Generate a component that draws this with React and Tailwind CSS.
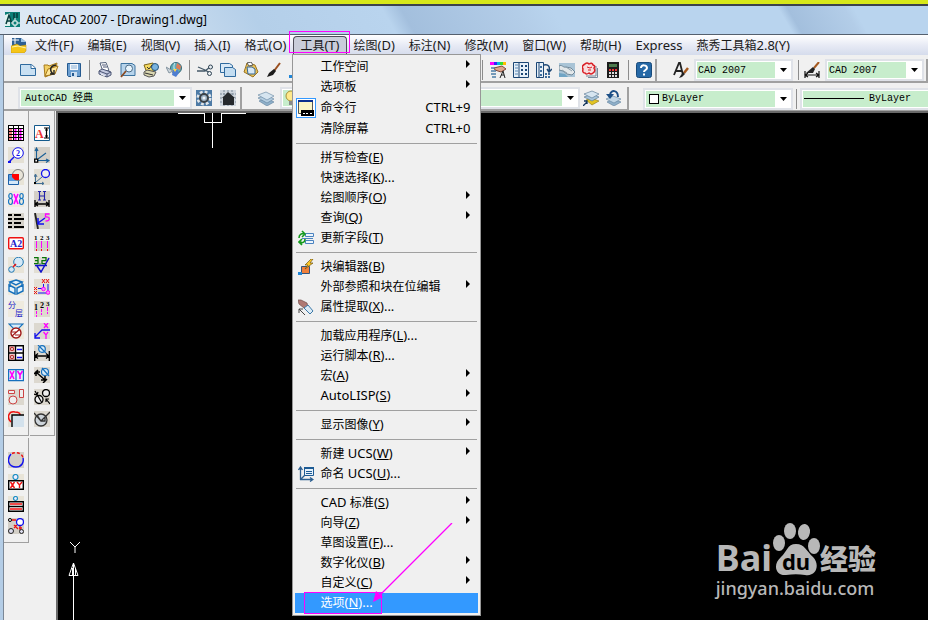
import React from "react";

// text inside the small tool icons
function T({ x, y, s = 8, fill = "#000", bold, children }) {
  return (
    <text x={x} y={y} fontSize={s} fill={fill} fontWeight={bold ? 700 : 400} fontFamily="Liberation Serif, Noto Sans CJK SC, serif">
      {children}
    </text>
  );
}

const art = {
  acad: (
    <>
      <path d="M0 0h15v15H0z" fill="#0d7f78" />
      <path d="M0 3l5-2v13H0z" fill="#dff3ee" />
      <path d="M1 12l3-9 3 9M2 9h4M9 1v6M12 1v5" stroke="#063c3c" strokeWidth="1.5" />
      <path d="M10 6v9M6 11h9" stroke="#fff" strokeWidth="1" />
      <path d="M8 9h4v4H8z" fill="#0d7f78" stroke="#fff" />
    </>
  ),
  dwg: (
    <>
      <path d="M1 1h9l5 4v7H1z" fill="#2d5f93" />
      <path d="M10 1l5 4h-5z" fill="#9cc3e6" />
      <path d="M4 0v7M1 3h7" stroke="#fff" />
      <path d="M0 9l6-2 3 2 6-1v6l-2 2H0z" fill="#f5c518" stroke="#b98a08" strokeWidth=".5" />
      <path d="M1 10l6-1 8 2" stroke="#fff3a8" />
    </>
  ),
  newFile: (
    <>
      <path d="M.5 2.500h11l4 3.500v7.500H.5z" fill="#c9e0f2" stroke="#2f6a9e" />
      <path d="M11 2.500v4h4" fill="#fff" stroke="#2f6a9e" />
    </>
  ),
  open: (
    <>
      <path d="M1 3h4l1 1 8-3-2 10-10 4z" fill="#f2cf63" stroke="#a77a1d" />
      <path d="M2 14L5 7l10-3-3 8z" fill="#ffe79a" stroke="#a77a1d" />
      <path d="M13 3C7 4 6 8 10 12M7 12h4V8" stroke="#222" strokeWidth="1.400" />
    </>
  ),
  save: (
    <>
      <path d="M1.500 1.500h13v13h-12l-1-1z" fill="#6b9ed0" stroke="#24598f" />
      <path d="M4 2h8v6H4z" fill="#f4f8fc" />
      <path d="M5 4h6M5 6h6" stroke="#8ab0d5" />
      <path d="M5 10h6v5H5z" fill="#cfe0f1" />
      <path d="M6 11h2v3H6z" fill="#24598f" />
    </>
  ),
  print: (
    <>
      <path d="M3 1l6-.5 3 8-6 1z" fill="#fff" stroke="#55637c" />
      <path d="M2 9l3-2 9 3v3l-4 2-8-3z" fill="#c3c9e0" stroke="#4c5675" />
      <path d="M2 9l8 3 4-2M10 12v3M5 3h4M6 5h4" stroke="#4c5675" />
      <path d="M4 12l4 2" stroke="#fff" />
    </>
  ),
  preview: (
    <>
      <path d="M1 1.500h11l3 2v10H1z" fill="#b7d4ec" stroke="#3c739f" />
      <circle cx="9" cy="6.500" r="3.500" fill="#e8f4fc" stroke="#4a6a86" />
      <path d="M6 9l-5 6" stroke="#8a4a22" strokeWidth="1.800" />
    </>
  ),
  publish: (
    <>
      <path d="M1 3l9-2 3 7-9 3z" fill="#f5d95f" stroke="#7c6418" />
      <circle cx="12" cy="5" r="3.500" fill="#79b3df" stroke="#25577f" />
      <path d="M1 10l3-2 9 2-2 4-5 1-5-2z" fill="#d9d6b0" stroke="#555" />
      <path d="M4 5l2 2 3-4M2 11l8 2" stroke="#333" />
    </>
  ),
  dwf: (
    <>
      <circle cx="10" cy="6" r="5.500" fill="#5faab8" stroke="#356a78" />
      <path d="M9 1c-2 3-1 7 1 10" stroke="#d7f0f2" />
      <path d="M11 1l4 3-1 4-4-2z" fill="#e07b54" />
      <path d="M7 8l4-1 2 4-3 4-4-2z" fill="#4f7ed0" />
      <path d="M0 5l7 4-4 2z" fill="#ccd6dd" stroke="#8594a0" />
      <path d="M7 7h4l-2 3z" fill="#ffd94b" />
    </>
  ),
  cut: (
    <>
      <path d="M0 9h8l5-4M1 5l7 3 5 3" stroke="#445868" strokeWidth="1.300" />
      <circle cx="13.500" cy="5" r="2" fill="#e9eef2" stroke="#2e4252" />
      <circle cx="12.500" cy="11.500" r="2" fill="#e9eef2" stroke="#2e4252" />
    </>
  ),
  copy: (
    <>
      <path d="M.5 1.500h9l3 2v7H.5z" fill="#d9e9f6" stroke="#2f6a9e" />
      <path d="M4.500 5.500h8l3 2v7h-11z" fill="#c3ddf1" stroke="#2f6a9e" />
    </>
  ),
  paste: (
    <>
      <path d="M4 1l8 2 3 7-5 5-9-5z" fill="#e9c25a" stroke="#9c7420" />
      <path d="M4 5h5l3 2v5H5z" fill="#d7e8f5" stroke="#36658e" />
      <path d="M4 1l4-1 2 3-4 1z" fill="#fff" stroke="#555" />
    </>
  ),
  brush: (
    <>
      <path d="M14 1L8 9" stroke="#9a4f1f" strokeWidth="2" />
      <path d="M8 7l2 2-3 4-6 2 2-4z" fill="#1c1c1c" />
    </>
  ),
  blockEdit: (
    <>
      <path d="M3.500 7.500h8v7h-8z" fill="#f0803c" stroke="#35547a" />
      <path d="M0 13h4v3H0z" fill="#1f86d8" />
      <path d="M13 0L7 6h3L7 10l8-6h-3l3-4z" fill="#ffc928" stroke="#6d5310" strokeWidth=".7" />
    </>
  ),
  props: (
    <>
      <path d="M0 0h4v3H0z" fill="#f0f" />
      <path d="M4 0h3v3H4z" fill="#32f" />
      <path d="M7 0h3v3H7z" fill="#0bd" />
      <path d="M10 0h3v3h-3z" fill="#3d3" />
      <path d="M13 0h3v3h-3z" fill="#fb0" />
      <path d="M4 6l8-2 4 3-5 3-6-2z" fill="#dca58d" stroke="#7e4838" />
      <path d="M1 6h4M1 9h5M1 12h5M2 15h4" stroke="#4c7da6" strokeWidth="1.500" />
      <path d="M10 16l3-7 2 7M11 13h3" stroke="#222" />
    </>
  ),
  center: (
    <>
      <path d="M.5.5h15v15H.5z" fill="#e7f0f8" stroke="#1c4775" />
      <path d="M6 0v16" stroke="#1c4775" />
      <path d="M2 3h3M2 6h3M2 9h3M2 12h3" stroke="#5787b5" />
      <path d="M8 3h2v2H8zM12 3h2v2h-2zM8 7h2v2H8zM12 7h2v2h-2zM8 11h2v2H8zM12 11h2v2h-2z" fill="#1c4775" />
    </>
  ),
  palettes: (
    <>
      <path d="M.5.5h7v15h-7z" fill="#e7f0f8" stroke="#1c4775" />
      <path d="M3 0v16" stroke="#1c4775" />
      <path d="M4 4h2v2H4zM4 8h2v2H4zM4 12h2v2H4zM9 11h2v2H9zM12 11h2v2h-2zM9 14h2v2H9zM12 14h2v2h-2z" fill="#3e6c9b" />
      <path d="M8 3c5-1 6 2 5 6M11 7l2 3 3-3" stroke="#1c4775" strokeWidth="1.500" />
    </>
  ),
  sheet: (
    <>
      <path d="M0 1h16v14H0z" fill="#a9c4d6" />
      <path d="M0 4c3-2 4 2 7 1l5 1 4 4-3 3-5-1-4-3-4-1z" fill="#e3e8ea" stroke="#71899a" />
      <path d="M7 5l6 4M3 8l5 3" stroke="#8fa2ae" />
      <path d="M0 11l6 1 3 3H0z" fill="#6fa4c4" />
    </>
  ),
  markup: (
    <>
      <path d="M14 4v10H4M15.500 6v9.500H6" stroke="#77899a" />
      <path d="M3 1h9v11H1V4z" fill="#f8dede" />
      <path d="M3 2q2-2 4 0q3-2 4 1q3 1 1 3q2 3-1 5q-2 2-4 0q-3 2-4 0q-3 0-2-4q-2-3 2-5z" stroke="#d91f26" strokeWidth="1.500" />
      <path d="M5 5l3 1 2-1M6 8h3" stroke="#d91f26" />
    </>
  ),
  calc: (
    <>
      <path d="M2 0h12v16H2z" fill="#1c1c1c" />
      <path d="M4 2h8v3H4z" fill="#4c7a4c" />
      <path d="M4 7h2v2H4zM7 7h2v2H7zM10 7h2v2h-2z" fill="#e33" />
      <path d="M4 10h2v2H4zM7 10h2v2H7zM10 10h2v2h-2zM4 13h2v2H4zM7 13h2v2H7zM10 13h2v2h-2z" fill="#ddd" />
    </>
  ),
  help: (
    <>
      <rect x=".5" y=".5" width="15" height="15" rx="2" fill="#2568a6" stroke="#184a7a" />
      <path d="M5 6c0-4 6-3 6 0c0 2-3 2-3 4M8 11.500v2" stroke="#fff" strokeWidth="2" />
    </>
  ),
  textStyle: (
    <>
      <path d="M1 13L6 1h1l3 12M3 9h6" stroke="#222" strokeWidth="1.800" />
      <path d="M15 6l-4 5" stroke="#a5591f" strokeWidth="2.500" />
      <path d="M10 10l2 2-3 3-3 1z" fill="#222" />
    </>
  ),
  dimStyle: (
    <>
      <path d="M1 9v7M15 9v7M1 13h14M4 11l-3 2 3 2M12 11l3 2-3 2" stroke="#111" strokeWidth="1.200" />
      <path d="M15 0l-5 6" stroke="#a5591f" strokeWidth="2" />
      <path d="M9 5l2 2-2 4H2z" fill="#222" />
    </>
  ),
  gear: (
    <>
      <path d="M0 0h16v16H0z" fill="#4e7ba6" />
      <circle cx="8" cy="8" r="6" stroke="#dfe5ea" strokeWidth="3" strokeDasharray="2.700 2" />
      <circle cx="8" cy="8" r="4" fill="#9fb4c6" stroke="#3b4248" strokeWidth="2" />
      <circle cx="8" cy="8" r="1.500" fill="#eef3f7" />
    </>
  ),
  home: (
    <>
      <path d="M0 0h16v16H0z" fill="#cfd6de" />
      <path d="M0 4h16M0 8h16M0 12h16M4 0v16M8 0v16M12 0v16" stroke="#7d8b99" strokeDasharray="2 1" />
      <path d="M8 2l7 6h-1v7H3V8H2z" fill="#25292d" />
    </>
  ),
  layers: (
    <>
      <path d="M1 11l7-3 8 4-7 4z" fill="#8fb0ca" stroke="#5e7f9c" strokeWidth=".6" />
      <path d="M0 8l8-3 8 4-7 4z" fill="#b4cde0" stroke="#5e7f9c" strokeWidth=".6" />
      <path d="M0 5l8-3 8 4-7 4z" fill="#d6e5f0" stroke="#5e7f9c" strokeWidth=".6" />
    </>
  ),
  layerMake: (
    <>
      <path d="M3 10l5-2 8 3-7 4z" fill="#e3c422" stroke="#8b7612" strokeWidth=".6" />
      <path d="M1 7l8-3 7 3-7 4z" fill="#a9c5da" stroke="#4d6f8c" strokeWidth=".6" />
      <path d="M1 4l8-3 7 3-7 4z" fill="#d6e5f0" stroke="#4d6f8c" strokeWidth=".6" />
      <path d="M0 16l4-4M1 11h3v3" stroke="#12355c" strokeWidth="1.300" />
    </>
  ),
  layerPrev: (
    <>
      <path d="M2 12l6-3 8 3-7 4z" fill="#8fb0ca" stroke="#5e7f9c" strokeWidth=".6" />
      <path d="M1 9l7-3 8 3-7 4z" fill="#c1d6e6" stroke="#5e7f9c" strokeWidth=".6" />
      <path d="M13 7C13 0 6-1 5 5" stroke="#1d4f86" strokeWidth="2" />
      <path d="M1 4h8L5 9z" fill="#1d4f86" />
    </>
  ),
  bulb: (
    <>
      <circle cx="8" cy="6" r="5" fill="#ffe98a" stroke="#a8913a" />
      <path d="M6 11h4v4H6z" fill="#8a8a8a" />
    </>
  ),
  // left tool columns
  grid: (
    <>
      <path d="M0 0h16v16H0z" fill="#fff" />
      <path d="M7.500 3v13M12.500 3v13" stroke="#f0f" strokeWidth="2" />
      <path d="M0 .5h16M0 3.500h16M0 6.500h16M0 9.500h16M0 12.500h16M0 15.500h16M.5 0v16M5.500 0v16M10.500 0v16M15.500 0v16" stroke="#000" />
      <path d="M1 5h3M1 8h3M1 11h3M1 14h3" stroke="#e00" />
    </>
  ),
  mag: (
    <>
      <path d="M0 0h16v16H0z" fill="#e4e0d4" />
      <circle cx="10" cy="6" r="5.300" fill="#fff" stroke="#11e" />
      <path d="M6 10l-5 5" stroke="#11e" strokeWidth="1.500" />
      <path d="M0 14h3v2H0z" fill="#11e" />
      <T x="8" y="9" fill="#11e" bold>2</T>
    </>
  ),
  shapes: (
    <>
      <path d="M0 0h16v16H0z" fill="#e8e4d8" />
      <path d="M.5 5.500h10v10H.5z" fill="#5b9bdc" stroke="#1c5fa8" />
      <path d="M1 12h9v3H1z" fill="#d5e8f8" />
      <circle cx="10" cy="6" r="5.500" stroke="#7a7a7a" />
      <path d="M4 5h7v6H7L4 8z" fill="#f00" />
    </>
  ),
  bxb: (
    <>
      <path d="M0 0h16v16H0z" fill="#eeeade" />
      <path d="M5 2h6v12H5z" fill="#ffd8ff" />
      <ellipse cx="2.500" cy="5" rx="1.700" ry="2.500" stroke="#1576c4" strokeWidth="1.200" />
      <ellipse cx="2.500" cy="10.500" rx="2" ry="3" stroke="#1576c4" strokeWidth="1.200" />
      <ellipse cx="13.500" cy="5" rx="1.700" ry="2.500" stroke="#1576c4" strokeWidth="1.200" />
      <ellipse cx="13.500" cy="10.500" rx="2" ry="3" stroke="#1576c4" strokeWidth="1.200" />
      <path d="M6 3l4 10M10 3L6 13" stroke="#f0f" strokeWidth="1.600" />
    </>
  ),
  list: (
    <>
      <path d="M0 0h16v16H0z" fill="#d6d2ca" />
      <path d="M0 2h4M6 2h7M0 6h4M6 6h10M0 10h4M6 10h7M0 14h4M6 14h10" stroke="#000" strokeWidth="2" />
    </>
  ),
  a2: (
    <>
      <rect x=".7" y="2.700" width="14.600" height="11" rx="1" fill="#fff" stroke="#e11" strokeWidth="1.400" />
      <T x="2" y="12" s="10" fill="#22c" bold>A2</T>
    </>
  ),
  bubbles: (
    <>
      <path d="M0 0h16v16H0z" fill="#e8e4d8" />
      <circle cx="10.500" cy="5" r="4.800" fill="#d4e8f6" stroke="#2078b4" />
      <circle cx="3.500" cy="12.500" r="2.800" fill="#d4e8f6" stroke="#2078b4" />
      <path d="M5 10l3-3" stroke="#e11" strokeWidth="1.500" />
    </>
  ),
  cubes: (
    <>
      <path d="M0 0h16v16H0z" fill="#eee9dc" />
      <path d="M8 1l6 2-6 3-6-3zM1 6l6 3v6l-6-3zM9 9l6-3v6l-6 3z" fill="#e5f4fd" stroke="#1670bd" strokeWidth="1.400" />
      <path d="M2 3v3M14 3v3" stroke="#1670bd" strokeWidth="1.400" />
    </>
  ),
  fenceng: (
    <>
      <path d="M0 0h16v16H0z" fill="#eeeade" />
      <T x="0" y="7" s="8" fill="#22c">分</T>
      <T x="7" y="15" s="8" fill="#22c">层</T>
    </>
  ),
  funnel: (
    <>
      <path d="M0 0h16v16H0z" fill="#eee9dc" />
      <path d="M1 1h14l-5 5H6z" fill="#d6ecfa" stroke="#1670bd" strokeWidth="1.200" />
      <circle cx="8" cy="10" r="5" fill="#fff" stroke="#a01818" strokeWidth="1.400" />
      <path d="M4 13l8-7M4 9h5M7 12h5" stroke="#a01818" strokeWidth="1.200" />
    </>
  ),
  table: (
    <>
      <path d="M.7.7h14.600v14.600H.7z" fill="#fff" stroke="#000" strokeWidth="1.400" />
      <path d="M7.500 0v16M0 8h16" stroke="#000" strokeWidth="1.400" />
      <path d="M1.500 1.500h5v5h-5zM1.500 9.500h5v5h-5z" fill="#e88" />
      <circle cx="4" cy="4" r="1.500" fill="#fff" stroke="#a22" />
      <circle cx="4" cy="12" r="1.500" fill="#fff" stroke="#a22" />
      <path d="M9 4.500h5M9 12.500h5" stroke="#11e" strokeWidth="1.600" />
    </>
  ),
  xy: (
    <>
      <path d="M.6 2.600h14.800v11H.6zM8 3v10" fill="#e0f0fa" stroke="#1670bd" strokeWidth="1.200" />
      <path d="M2 4l4 8M6 4l-4 8M9.500 4l2.500 4 2.500-4M12 8v4" stroke="#f0f" strokeWidth="1.600" />
    </>
  ),
  forms: (
    <>
      <path d="M0 0h16v16H0z" fill="#dcd8cf" />
      <path d="M.5 1.500h6v3h-6zM11.500.5h4v8h-4z" fill="#eee" stroke="#c44" />
      <circle cx="5" cy="11" r="4" fill="#eee" stroke="#c44" />
    </>
  ),
  corner: (
    <>
      <path d="M0 0h16v16H0z" fill="#e4e0d6" />
      <path d="M3 11C-2 6 1 0 7 1c3 0 5 1 5 3" stroke="#e11" strokeWidth="1.500" />
      <path d="M4 4h12v12H4z" fill="#d3e1ec" />
      <path d="M4 16V4h12" stroke="#000" strokeWidth="1.400" />
    </>
  ),
  ai: (
    <>
      <path d="M.5.5h15v15H.5z" fill="#fff" stroke="#145a8c" />
      <T x="1" y="13" s="12" fill="#e33" bold>A</T>
      <path d="M10 3h5M12.500 3v10M10 13h5M11 5h3M11 11h3" stroke="#000" strokeWidth="1.200" />
    </>
  ),
  ucs1: (
    <>
      <path d="M0 0h16v16H0z" fill="#d3cfc7" />
      <path d="M2.500 13V1M1 4l1.500-3L4 4M3 13.500h12M12 12l3 1.500-3 2M4 12l8-6" stroke="#1a5f96" strokeWidth="1.100" />
      <path d="M.7 12.200h3v3h-3z" fill="#fff" stroke="#000" strokeWidth="1.300" />
    </>
  ),
  ucs2: (
    <>
      <path d="M0 0h16v16H0z" fill="#e2ded3" />
      <path d="M1.500 13V6M0 8l1.500-3L3 8M2 14.500h8M8 13l2 1.500L8 16M2 13l6-5" stroke="#426f94" />
      <circle cx="11.500" cy="4.500" r="4" fill="#eee" stroke="#11e" strokeWidth="1.300" />
      <path d="M0 13h2v2H0z" fill="#000" />
    </>
  ),
  hdim: (
    <>
      <path d="M0 0h16v16H0z" fill="#d3cfc7" />
      <path d="M1 9v7M15 9v7M1 13h14M4 11l-3 2 3 2M12 11l3 2-3 2" stroke="#000" strokeWidth="1.300" />
      <path d="M5.500 0v9M10.500 0v9M5 5h6M4 .5h3M9 .5h3M4 9h3M9 9h3" stroke="#22a" strokeWidth="1.100" />
    </>
  ),
  five: (
    <>
      <path d="M0 0h16v16H0z" fill="#d3cfc7" />
      <path d="M1 0l3 16" stroke="#222" strokeWidth="1.800" />
      <path d="M11 5l-7 5M4 5v6h6" stroke="#11e" strokeWidth="1.500" />
      <path d="M15.500 1h-4v3c5-1 5 4 0 4" stroke="#f0f" strokeWidth="1.300" />
    </>
  ),
  ticks: (
    <>
      <path d="M0 0h16v16H0z" fill="#d3cfc7" />
      <path d="M0 0h16v6H0z" fill="#eee" />
      <T x="0" y="5" s="7" bold>1</T>
      <T x="6" y="5" s="7" bold>2</T>
      <T x="12" y="5" s="7" bold>3</T>
      <path d="M2.500 6v7M7.500 6v7M13.500 6v7" stroke="#f0f" />
      <path d="M2.500 14v2M7.500 14v2M13.500 14v2" stroke="#e11" />
    </>
  ),
  rough: (
    <>
      <path d="M0 0h16v16H0z" fill="#e2ded3" />
      <path d="M0 .7h4v6H0M1 3.700h3M5.500 7h1M8 .7h4v3H8v3h4" stroke="#087408" strokeWidth="1.300" />
      <path d="M1 8.500h12M3 9l4 6 8-14" stroke="#11c" strokeWidth="1.500" />
    </>
  ),
  coord: (
    <>
      <path d="M0 0h16v16H0z" fill="#e2ded3" />
      <path d="M8 0l3 4M11 0L8 4M12 0l3 4M15 0l-3 4M0 8l3 3M3 8l-3 3M0 12l3 3M3 12l-3 3" stroke="#e11" />
      <path d="M4 9.500h6M4 14h10M9.500 5v5M14 5v9" stroke="#11e" />
      <circle cx="9.500" cy="10" r="1.800" fill="#f8f" stroke="#f0f" />
      <circle cx="14" cy="13.500" r="1.800" fill="#f8f" stroke="#f0f" />
    </>
  ),
  steps: (
    <>
      <path d="M0 0h16v16H0z" fill="#dedace" />
      <T x="0" y="9" s="8" bold>1</T>
      <T x="6" y="7" s="8" bold>2</T>
      <T x="12" y="5" s="7" bold>3</T>
      <path d="M2.500 10v3M7.500 8v3M13.500 6v4M2.500 14v2M7.500 12v2M13.500 11v2" stroke="#f0f" />
    </>
  ),
  leader: (
    <>
      <path d="M0 0h16v16H0z" fill="#dcd8cf" />
      <path d="M16 7H8l-7 7M1 10v5h5" stroke="#11e" strokeWidth="1.300" />
      <path d="M10 0l4 5M14 0l-4 5M9.500 9l2.500 3 2-3M12 12v4" stroke="#f0f" strokeWidth="1.300" />
    </>
  ),
  diaH: (
    <>
      <path d="M0 0h16v16H0z" fill="#dcd8cf" />
      <path d="M.7 6v10M15.300 6v10M1 11h14M4 8.500L1 11l3 2.500M12 8.500l3 2.500-3 2.500" stroke="#000" strokeWidth="1.300" />
      <circle cx="8" cy="4" r="3.300" fill="#d8ecf8" stroke="#1670bd" strokeWidth="1.200" />
      <path d="M4 0l8 8" stroke="#1670bd" strokeWidth="1.200" />
    </>
  ),
  diaD: (
    <>
      <path d="M0 0h16v16H0z" fill="#dcd8cf" />
      <path d="M2 5l9 8M0 7l4-4M9 16l4-4M2 9V5h4M11 9v4H7" stroke="#000" strokeWidth="1.500" />
      <circle cx="11" cy="5" r="3.500" fill="#d8ecf8" stroke="#1670bd" strokeWidth="1.200" />
      <path d="M8 1l7 8" stroke="#1670bd" strokeWidth="1.200" />
    </>
  ),
  rad: (
    <>
      <path d="M0 0h16v16H0z" fill="#dcd8cf" />
      <circle cx="5" cy="10.500" r="4" fill="#eee" stroke="#000" strokeWidth="1.300" />
      <circle cx="12" cy="4" r="3.500" fill="#eee" stroke="#000" strokeWidth="1.300" />
      <path d="M1 2l7 12M0 5l3 1 1-3M16 15l-4-5M12 13v-3h3" stroke="#000" strokeWidth="1.200" />
    </>
  ),
  dia: (
    <>
      <path d="M0 0h16v16H0z" fill="#dcd8cf" />
      <circle cx="7" cy="9" r="6" fill="#cdd4da" stroke="#333" strokeWidth="1.300" />
      <path d="M0 2l7 8 9-9M3 4l4 6h4V6" stroke="#333" strokeWidth="1.300" />
    </>
  ),
  arc: (
    <>
      <path d="M0 0h16v16H0z" fill="#d3cfc7" />
      <path d="M3 2C-2 8 1 15 8 15c6 0 8-5 7-9" stroke="#11e" strokeWidth="1.400" />
      <path d="M4 1.500C8-.5 14 1 15 6" stroke="#e11" strokeWidth="1.400" strokeDasharray="3 2" />
    </>
  ),
  xyBox: (
    <>
      <path d="M0 0h16v16H0z" fill="#e8e4d8" />
      <circle cx="7.500" cy="3" r="2.500" fill="#eef" stroke="#1c8fc4" strokeWidth="1.200" />
      <path d="M.7 6.700h14.600v8.600H.7z" fill="#fff" stroke="#000" strokeWidth="1.400" />
      <path d="M2.500 8l4 6M6.500 8l-4 6M9 8l2.500 3L14 8M11.500 11v3" stroke="#e11" strokeWidth="1.400" />
    </>
  ),
  rows: (
    <>
      <path d="M0 0h16v16H0z" fill="#e8e4d8" />
      <circle cx="7.500" cy="2.500" r="2" fill="#eef" stroke="#1c8fc4" strokeWidth="1.200" />
      <path d="M.7 5.700h14.600v9.600H.7zM1 10.500h14" fill="#fff" stroke="#000" strokeWidth="1.400" />
      <path d="M2 8h12M2 13h12" stroke="#e11" strokeWidth="1.300" />
    </>
  ),
  net: (
    <>
      <path d="M0 0h16v16H0z" fill="#d3cfc7" />
      <path d="M4 2h4M6 10l3-3M6 7l4 4M12 8v4M11 10h3" stroke="#e11" strokeWidth="1.300" />
      <circle cx="12" cy="4" r="3.500" fill="#fff" stroke="#11e" strokeWidth="1.300" />
      <circle cx="2" cy="2" r="1.500" fill="#fff" stroke="#000" />
      <circle cx="3" cy="13" r="2.500" fill="#dde" stroke="#222" />
      <circle cx="13.500" cy="13.500" r="2" fill="#dde" stroke="#222" />
    </>
  ),
  // menu icons
  cmd: (
    <>
      <path d="M.5 1.500h14v12H.5z" fill="#fbf6c8" stroke="#555" />
      <path d="M0 0h15v2H0z" fill="#0a2f8f" />
      <path d="M3 10h13v6H3z" fill="#000" />
      <path d="M5 13.500h2M8 13.500h2M12 13.500h2" stroke="#fff" />
    </>
  ),
  update: (
    <>
      <path d="M7.500 3.500h8v3h-8zM7.500 10.500h8v3h-8z" fill="#eef5fc" stroke="#4a83c0" />
      <path d="M4 8.500h11" stroke="#4a83c0" />
      <path d="M1 8c0-4 3-5 6-4M4 1l3 3-3 3M7 9c0 4-3 4-5 3M4 15l-3-3 3-3" stroke="#159a1d" strokeWidth="1.600" />
    </>
  ),
  extract: (
    <>
      <path d="M0 1h3l6 3 1 4-4 1-5-4z" fill="#b07a74" stroke="#6f4a48" strokeWidth=".7" />
      <path d="M6 9l4-3 5 6-3 3z" fill="#dcebf6" stroke="#3d7aa8" />
      <path d="M1 14v-4h4M1 10l6 6" stroke="#444" />
    </>
  ),
  ucsName: (
    <>
      <path d="M6.500 1.500h9v8h-9z" fill="#e5f1fb" stroke="#1d5b94" />
      <path d="M6 1h10v2H6zM8 5h6v1H8zM8 7h6v1H8z" fill="#1d5b94" />
      <path d="M2.500 14V1M.5 4l2-3 2 3M2 13.500h13M12 11.500l3 2-3 2M3 13l4-4" stroke="#2c5f90" strokeWidth="1.300" />
    </>
  ),
};

function Icon({ name }) {
  return (
    <svg viewBox="0 0 16 16" fill="none" className="block h-4 w-4 shrink-0" aria-hidden="true">
      {art[name]}
    </svg>
  );
}

function Tool({ name }) {
  return (
    <button type="button" aria-label={name} className="block h-4 w-4 shrink-0">
      <Icon name={name} />
    </button>
  );
}

const Divider = () => <div className="h-5 w-px shrink-0 bg-[#8c8c8c]" />;

function Select({ label, value, className = "", selectClass = "pl-1", children }) {
  return (
    <div className={"relative h-[22px] shrink-0 border-2 border-[#dfe2e8] bg-white font-[Liberation_Mono,Noto_Sans_CJK_SC,monospace] text-[10px] " + className}>
      <select aria-label={label} className={"block h-full w-full appearance-none border border-white bg-[#c7edcc] text-black outline-none " + selectClass}>
        <option>{value}</option>
      </select>
      {children}
      <span className="pointer-events-none absolute inset-y-0 right-0 flex w-4 items-center justify-center bg-white">
        <svg viewBox="0 0 7 4" className="h-1 w-[7px]">
          <path d="M0 0h7L3.500 4z" fill="#000" />
        </svg>
      </span>
    </div>
  );
}

function Panel({ className = "", children }) {
  return (
    <div className={"flex shrink-0 items-center border-r-2 border-b border-[#a0a0a0] " + className}>
      {children}
    </div>
  );
}

const menuBar = [
  ["文件", "(F)"],
  ["编辑", "(E)"],
  ["视图", "(V)"],
  ["插入", "(I)"],
  ["格式", "(O)"],
  ["工具", "(T)"],
  ["绘图", "(D)"],
  ["标注", "(N)"],
  ["修改", "(M)"],
  ["窗口", "(W)"],
  ["帮助", "(H)"],
  ["", "Express"],
  ["燕秀工具箱", "2.8(Y)"],
];

const toolsMenu = [
  [
    { text: "工作空间", sub: true },
    { text: "选项板", sub: true },
    { text: "命令行", keys: "CTRL+9", icon: "cmd", checked: true },
    { text: "清除屏幕", keys: "CTRL+0" },
  ],
  [
    { text: "拼写检查", hot: "E" },
    { text: "快速选择", hot: "K", dots: true },
    { text: "绘图顺序", hot: "O", sub: true },
    { text: "查询", hot: "Q", sub: true },
    { text: "更新字段", hot: "T", icon: "update" },
  ],
  [
    { text: "块编辑器", hot: "B", icon: "blockEdit" },
    { text: "外部参照和块在位编辑", sub: true },
    { text: "属性提取", hot: "X", dots: true, icon: "extract" },
  ],
  [
    { text: "加载应用程序", hot: "L", dots: true },
    { text: "运行脚本", hot: "R", dots: true },
    { text: "宏", hot: "A", sub: true },
    { latin: "AutoLISP", hot: "S", sub: true },
  ],
  [{ text: "显示图像", hot: "Y", sub: true }],
  [
    { text: "新建", tail: " UCS", hot: "W", sub: true },
    { text: "命名", tail: " UCS", hot: "U", dots: true, icon: "ucsName" },
  ],
  [
    { latin: "CAD ", text: "标准", hot: "S", sub: true },
    { text: "向导", hot: "Z", sub: true },
    { text: "草图设置", hot: "F", dots: true },
    { text: "数字化仪", hot: "B", sub: true },
    { text: "自定义", hot: "C", sub: true },
    { text: "选项", hot: "N", dots: true, active: true },
  ],
];

function MenuItem({ item }) {
  return (
    <button
      type="button"
      role="menuitem"
      className={
        "flex w-full items-center pr-2 text-left whitespace-pre " +
        (item.checked ? "h-[22px] " : "h-5 ") +
        (item.active ? "bg-[#3399ff] text-white" : "text-black")
      }
    >
      <span className="flex w-[25px] shrink-0 items-center">
        {item.icon && (
          <span className={item.checked ? "ml-px flex border border-[#3399ff] bg-white p-px" : "ml-[3px]"}>
            <Icon name={item.icon} />
          </span>
        )}
      </span>
      <span className="flex-1">
        {item.latin && <span className="text-[13px]">{item.latin}</span>}
        {item.text}
        <span className="text-[13px]">
          {item.tail}
          {item.hot && <>(<u>{item.hot}</u>)</>}
          {item.dots && "..."}
        </span>
      </span>
      {item.keys && <span className="text-[13px]">{item.keys}</span>}
      {item.sub && (
        <svg viewBox="0 0 4 8" className="mb-[6px] h-2 w-1">
          <path d="M0 0l4 4-4 4z" fill="#000" />
        </svg>
      )}
    </button>
  );
}

function ToolsMenu() {
  return (
    <div role="menu" className="absolute top-full -left-px z-20 -mt-px w-[189px] border border-[#979797] bg-[#f0f0f0] p-[2px] text-xs">
      {toolsMenu.map((group, i) => (
        <div key={i}>
          {i > 0 && (
            <div className="flex h-[9px] items-center px-px">
              <div className="h-px w-full bg-[#a0a0a0]" />
            </div>
          )}
          {group.map((item, j) => (
            <MenuItem key={j} item={item} />
          ))}
        </div>
      ))}
      <div className="pointer-events-none absolute bottom-px left-[11px] h-[22px] w-[78px] border border-[#f0f]" />
      <svg viewBox="0 0 80 80" fill="none" className="pointer-events-none absolute bottom-3 left-20 h-20 w-20">
        <path d="M79 0L6 73" stroke="#ff00ff" strokeWidth="1.300" />
        <path d="M0 79l3-11 7 6z" fill="#ff00ff" />
      </svg>
    </div>
  );
}

function MenuBar() {
  return (
    <nav className="flex h-5 shrink-0 items-center bg-linear-to-b from-white via-[#e8ebf5] to-[#d5dcec] pl-1 text-xs whitespace-nowrap text-[#1a1a1a]">
      <div className="pr-px pl-[3px]">
        <Icon name="dwg" />
      </div>
      {menuBar.map(([cn, latin]) =>
        cn === "工具" ? (
          <div key={latin} className="relative flex h-full items-center">
            <button type="button" className="h-[18px] rounded-t-sm border border-b-0 border-[#4d4d58] bg-[#c9cdda] px-[6px] leading-4">
              {cn}
              <span className="text-[13px]">{latin}</span>
            </button>
            <div className="pointer-events-none absolute -top-1 -left-1 z-30 h-[22px] w-[61px] border border-[#f0f]" />
            <ToolsMenu />
          </div>
        ) : (
          <button key={latin} type="button" className="px-[7px] leading-4">
            {cn}
            <span className="text-[13px]">{latin}</span>
          </button>
        )
      )}
    </nav>
  );
}

const colA = ["grid", "mag", "shapes", "bxb", "list", "a2", "bubbles", "cubes", "fenceng", "funnel", "table", "xy", "forms", "corner"];
const colB = ["ai", "ucs1", "ucs2", "hdim", "five", "ticks", "rough", "coord", "steps", "leader", "diaH", "diaD", "rad", "dia"];
const colC = ["arc", "xyBox", "rows", "net"];

function ToolColumn({ names }) {
  return (
    <div className="flex w-[25px] flex-col items-center gap-[6px] border-r border-b border-[#a0a0a0] pt-[14px] pb-2">
      {names.map((n) => (
        <Tool key={n} name={n} />
      ))}
    </div>
  );
}

function Watermark() {
  return (
    <div className="absolute right-[52px] bottom-5 text-[#b8b8b8]">
      <div className="flex items-end leading-none font-bold">
        <span className="font-['Noto_Sans',sans-serif] text-[36px] leading-9">Bai</span>
        <svg viewBox="0 0 48 54" className="h-[54px] w-12">
          <g fill="#b8b8b8">
            <ellipse cx="7" cy="21" rx="6" ry="8" />
            <ellipse cx="18" cy="9" rx="6" ry="8" />
            <ellipse cx="32" cy="10" rx="6" ry="8" transform="rotate(8 32 10)" />
            <ellipse cx="42" cy="24" rx="6" ry="8" />
            <path d="M24 22c-9 0-9 8-15 13c-9 8-5 19 5 18c7-1 13-1 19 0c12 2 15-11 8-18c-6-5-8-13-17-13z" />
          </g>
          <text x="24" y="48" textAnchor="middle" fontSize="22" fontWeight="700" fill="#000" fontFamily="Noto Sans, sans-serif">
            du
          </text>
        </svg>
        <span className="pb-1 font-['Noto_Sans_CJK_SC',sans-serif] text-[28px] leading-7 font-black">经验</span>
      </div>
      <div className="font-['Noto_Sans',sans-serif] text-lg leading-6 font-medium">jingyan.baidu.com</div>
    </div>
  );
}

function Canvas() {
  return (
    <main className="relative flex-1 overflow-hidden border-t-2 border-l-2 border-[#696969] bg-black">
      <svg viewBox="0 0 68 36" fill="none" className="absolute top-0 left-[120px] h-9 w-[68px]" shapeRendering="crispEdges">
        <path d="M0 .5h26M43 .5h25M26.500 0v9.500h17V0M34.500 0v35" stroke="#fff" />
      </svg>
      <svg viewBox="0 0 16 80" fill="none" className="absolute bottom-0 left-[10px] h-20 w-4">
        <path d="M2 2l5 5v6M12 2L7 7" stroke="#fff" />
        <path d="M5.500 23L1 35.500h9zM5.500 23v57M4.500 28v7M7.500 28v7" stroke="#fff" />
      </svg>
      <Watermark />
    </main>
  );
}

export default function App() {
  return (
    <div className="flex h-screen flex-col overflow-hidden border-t-4 border-[#d7e81a] bg-[#f0f0f0] font-['Noto_Sans','Noto_Sans_CJK_SC',sans-serif]">
      <header className="flex h-[31px] shrink-0 items-center gap-[5px] border-t-2 border-b border-t-[#3c424c] border-b-[#55606e] bg-[linear-gradient(60deg,#dfeaf5_0%,#d3e2f1_14%,#b4cfe9_28%,#b9d4ee_42%,#a3bfdd_44%,#b3cde8_56%,#b9d4ee_60%,#b9d4ee_84%,#a3bfdd_85%,#b3cde8_91%,#b9d4ee_92%)] pl-[5px]">
        <Icon name="acad" />
        <h1 className="text-xs leading-5 whitespace-pre text-black">AutoCAD 2007 - [Drawing1.dwg]</h1>
      </header>

      <div className="flex min-h-0 flex-1 border-l-[3px] border-[#b4cde6]">
        <div className="flex min-w-0 flex-1 flex-col border-l border-[#7c8896]">
          <MenuBar />

          <div className="flex h-7 shrink-0 border-b border-[#a0a0a0] pt-1">
            <Panel className="gap-[7px] pr-[3px] pl-4">
              <Tool name="newFile" />
              <Tool name="open" />
              <Tool name="save" />
              <Divider />
              <Tool name="print" />
              <Tool name="preview" />
              <Tool name="publish" />
              <Tool name="dwf" />
              <Divider />
              <Tool name="cut" />
              <Tool name="copy" />
              <Tool name="paste" />
              <Tool name="brush" />
              <Tool name="blockEdit" />
              <div className="w-[163px]" />
              <Divider />
              <Tool name="props" />
              <Tool name="center" />
              <Tool name="palettes" />
              <Tool name="sheet" />
              <Tool name="markup" />
              <Tool name="calc" />
              <Divider />
              <Tool name="help" />
            </Panel>
            <Panel className="gap-[5px] pr-[2px] pl-4">
              <Tool name="textStyle" />
              <Select label="文字样式" value="CAD 2007" className="w-[99px]" selectClass="pl-px" />
              <Divider />
              <Tool name="dimStyle" />
              <Select label="标注样式" value="CAD 2007" className="w-[99px]" selectClass="pl-px" />
            </Panel>
          </div>

          <div className="flex h-7 shrink-0 border-b border-[#a0a0a0] pt-1">
            <Panel className="gap-2 pr-1 pl-[14px]">
              <div className="-mr-1">
                <Select label="工作空间" value="AutoCAD 经典" className="w-[174px]" />
              </div>
              <Tool name="gear" />
              <Tool name="home" />
            </Panel>
            <Panel className="gap-[6px] pr-[6px] pl-4">
              <Tool name="layers" />
              <Select label="图层" value="" className="w-[300px]">
                <span className="pointer-events-none absolute top-px left-px">
                  <Icon name="bulb" />
                </span>
              </Select>
              <div className="-ml-[3px]">
                <Tool name="layerMake" />
              </div>
              <Tool name="layerPrev" />
            </Panel>
            <div className="flex min-w-0 flex-1 items-center gap-[3px] overflow-hidden pl-[14px]">
              <Select label="颜色" value="ByLayer" className="w-[150px]" selectClass="pl-4">
                <span className="pointer-events-none absolute top-1 left-1 h-[10px] w-[10px] border border-black bg-white" />
              </Select>
              <Divider />
              <Select label="线型" value="ByLayer" className="w-[190px]" selectClass="pl-[66px]">
                <span className="pointer-events-none absolute top-2 left-[2px] h-px w-[60px] bg-black" />
              </Select>
            </div>
          </div>

          <div className="flex min-h-0 flex-1">
            <aside className="w-[52px] shrink-0">
              <div className="flex gap-px">
                <ToolColumn names={colA} />
                <ToolColumn names={colB} />
              </div>
              <div className="mt-[2px] flex">
                <ToolColumn names={colC} />
              </div>
            </aside>
            <Canvas />
          </div>
        </div>
      </div>
    </div>
  );
}
